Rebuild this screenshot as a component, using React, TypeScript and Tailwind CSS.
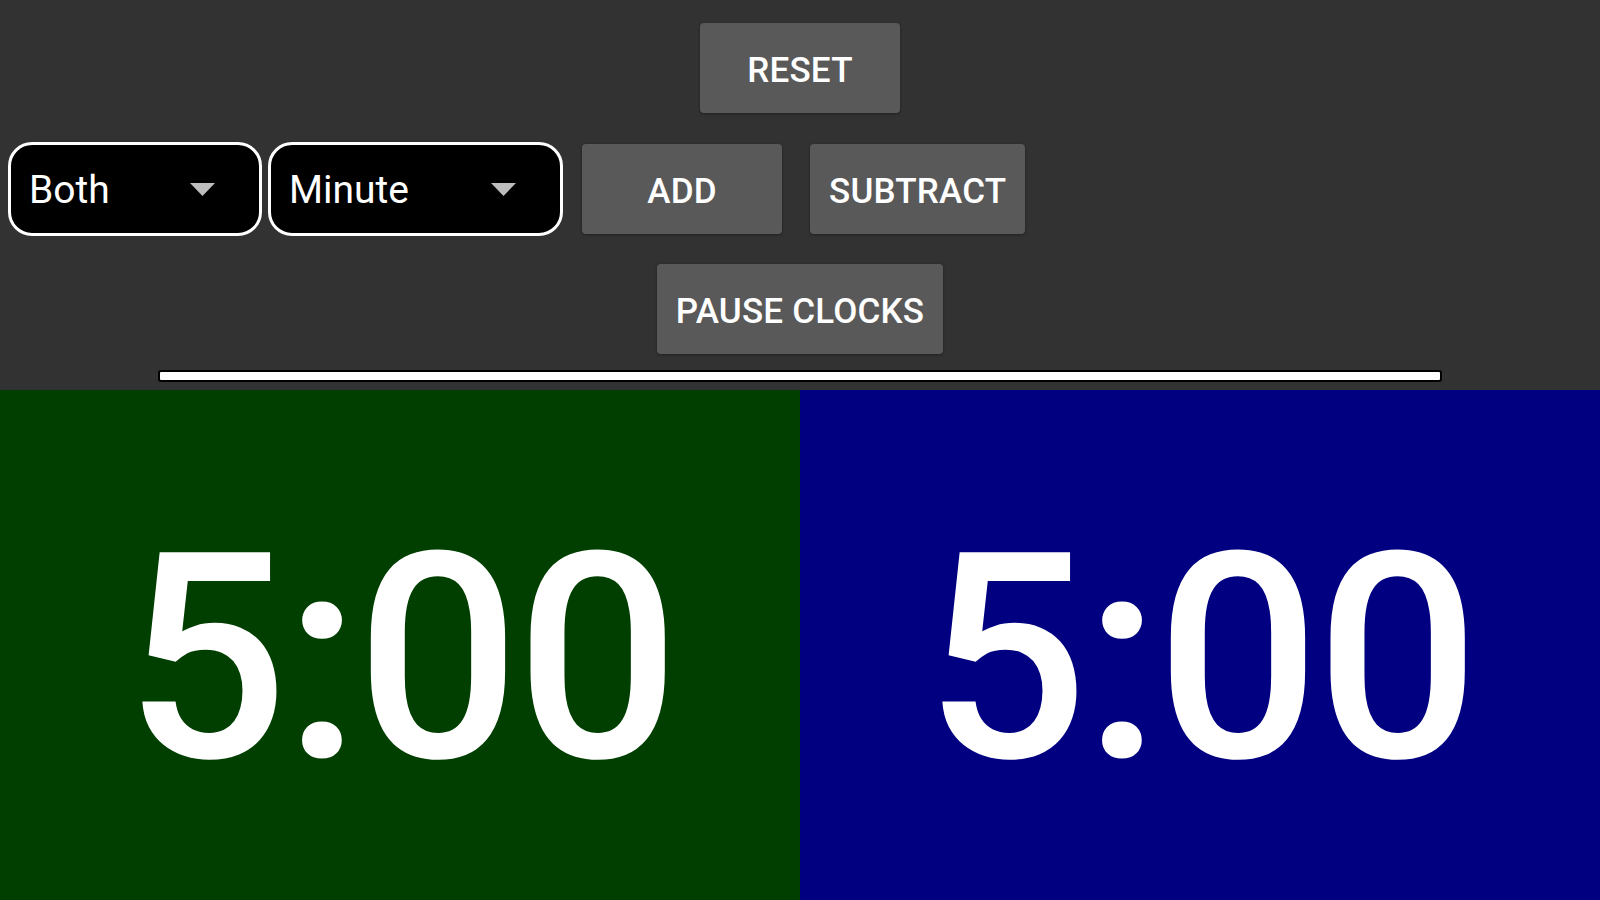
import { FC } from "react";

const Btn: FC<{ label: string; className?: string }> = ({ label, className }) => (
  <button
    className={
      "h-[90px] min-w-[200px] px-[19px] pt-[6px] rounded-[4px] bg-[#595959] text-white text-[35px] font-medium uppercase tracking-[0.2px] shadow-[0_1px_3px_rgba(0,0,0,0.35)] " +
      (className || "")
    }>
    {label}
  </button>
);

const Select: FC<{ value: string; width: string }> = ({ value, width }) => (
  <div
    className={
      "h-[94px] flex items-center justify-between pl-[18px] pr-[44px] bg-black border-[3px] border-white rounded-[24px] text-white text-[39px] " +
      width
    }>
    <span className="pt-[3px]">{value}</span>
    <svg width="25" height="13" viewBox="0 0 25 13">
      <polygon points="0,0 25,0 12.5,13" fill="#bdbdbd" />
    </svg>
  </div>
);

const Clock: FC<{ time: string; bg: string }> = ({ time, bg }) => (
  <div className={"flex items-center justify-center pt-[28px] " + bg}>
    <span className="text-white text-[288px] font-medium leading-none tracking-[-4px]">{time}</span>
  </div>
);

export default function App() {
  return (
    <div className="w-full h-[900px] flex flex-col bg-[#323232] font-['Roboto',sans-serif] overflow-hidden">
      <div className="flex flex-col">
        <div className="flex justify-center pt-[23px]">
          <Btn label="Reset" />
        </div>
        <div className="flex items-center pl-[8px] mt-[29px]">
          <Select value="Both" width="w-[254px]" />
          <div className="ml-[6px]">
            <Select value="Minute" width="w-[295px]" />
          </div>
          <Btn label="Add" className="ml-[19px]" />
          <Btn label="Subtract" className="ml-[28px]" />
        </div>
        <div className="flex justify-center mt-[28px]">
          <Btn label="Pause Clocks" />
        </div>
        <div className="w-[1284px] mx-auto mt-[16px] h-[12px] border-2 border-black bg-white rounded-[3px]" />
      </div>
      <div className="flex-1 grid grid-cols-2 mt-[8px]">
        <Clock time="5:00" bg="bg-[#003f00]" />
        <Clock time="5:00" bg="bg-[#000080]" />
      </div>
    </div>
  );
}
